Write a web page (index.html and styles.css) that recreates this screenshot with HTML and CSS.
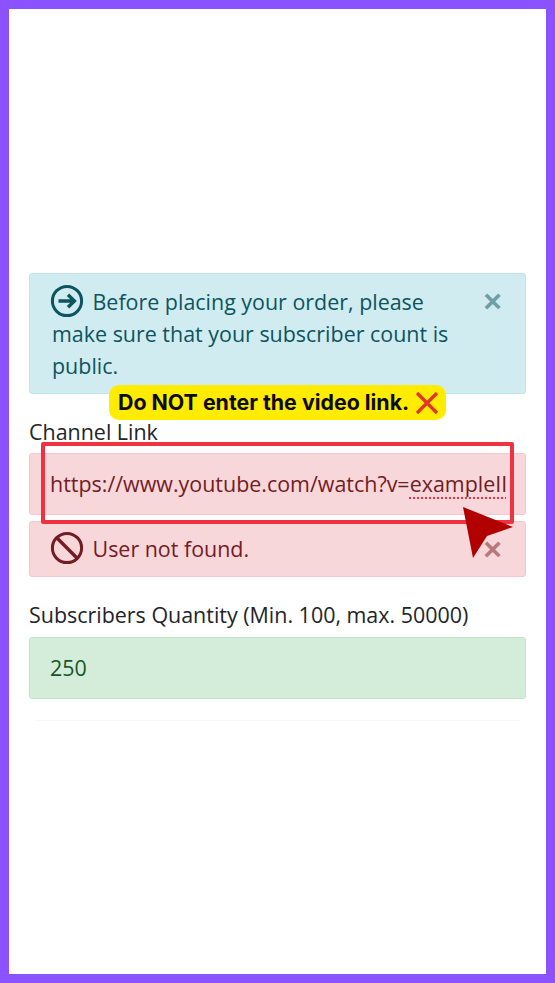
FILE: index.html
```html
<!DOCTYPE html>
<html lang="en">
<head>
<meta charset="utf-8">
<title>Order form</title>
<link rel="stylesheet" href="styles.css">
</head>
<body>
<main class="frame">
  <div class="alert alert-info">
    <p class="alert-text">
      <svg class="alert-icon" viewBox="0 0 34 34" width="34" height="34" aria-hidden="true">
        <circle cx="17" cy="17" r="14.6" fill="none" stroke="currentColor" stroke-width="3"/>
        <path d="M8.5 17H24M18 10.8 24.4 17 18 23.2" fill="none" stroke="currentColor" stroke-width="3.4"/>
      </svg>Before placing your order, please make sure that your subscriber count is public.
    </p>
    <span class="close close-info">×</span>
  </div>
  <label class="label label-channel">Channel Link</label>
  <div class="field field-invalid"><span class="field-value">https://www.youtube.com/watch?v=<span class="misspelt">exampleII</span></span></div>
  <div class="alert alert-danger">
    <p class="alert-text">
      <svg class="alert-icon" viewBox="0 0 34 34" width="34" height="34" aria-hidden="true">
        <circle cx="17" cy="17" r="14.6" fill="none" stroke="currentColor" stroke-width="3"/>
        <path d="M6.8 6.8 27.2 27.2" fill="none" stroke="currentColor" stroke-width="3.4"/>
      </svg>User not found.
    </p>
    <span class="close close-danger">×</span>
  </div>
  <label class="label label-quantity">Subscribers Quantity (Min. 100, max. 50000)</label>
  <div class="field field-valid"><span class="field-value">250</span></div>
  <hr class="rule">

  <div class="tag"><span class="tag-text">Do NOT enter the video link.</span>
    <svg class="tag-x" viewBox="0 0 24 24" width="24" height="24" aria-hidden="true">
      <path d="M2 2 22 22M22 2 2 22" fill="none" stroke="#e5322d" stroke-width="3.2"/>
    </svg>
  </div>
  <div class="highlight"></div>
  <svg class="pointer" viewBox="0 0 50 52" width="50" height="52" aria-hidden="true">
    <path d="M0 0 50 20 24 29 10 51Z" fill="#b00000"/>
  </svg>
</main>
</body>
</html>
```
FILE: styles.css
```css
* { box-sizing: border-box; }
html, body { margin: 0; padding: 0; background: #fff; }
.frame {
  position: relative;
  width: 555px;
  height: 983px;
  border: 9px solid #8c52ff;
  padding: 264px 20px 0;
  font-family: "Open Sans", sans-serif;
  font-size: 21.45px;
  color: #212529;
}
.alert {
  position: relative;
  border: 1px solid;
  border-radius: 3px;
  padding: 10px 70px 10px 22px;
}
.alert-text { margin: 0; line-height: 32px; }
.alert-icon { vertical-align: -8px; margin-right: 8.5px; margin-left: -2px; }
.alert-info { height: 121px; background: #d1ecf1; border-color: #bee5eb; color: #0c5460; }
.alert-danger { height: 56px; margin-top: 6px; padding-top: 9px; background: #f8d7da; border-color: #f5c6cb; color: #721c24; }
.close {
  position: absolute;
  right: 23px;
  font-family: "Liberation Sans", sans-serif;
  font-weight: 700;
  font-size: 32px;
  line-height: 32px;
  opacity: .5;
}
.close-info { top: 11px; }
.close-danger { top: 11px; }
.label { display: block; line-height: 32px; }
.label-channel { margin-top: 22px; margin-bottom: 5px; }
.label-quantity { margin-top: 22px; margin-bottom: 6px; }
.field {
  height: 62px;
  border: 1px solid;
  border-radius: 3px;
  padding: 0 19px 0 20px;
  line-height: 60px;
  white-space: nowrap;
  overflow: hidden;
}
.field-value { display: block; overflow: hidden; }
.field-invalid { background: #f8d7da; border-color: #f5c6cb; color: #721c24; }
.field-valid { background: #d4edda; border-color: #c3e6cb; color: #155724; }
.misspelt { text-decoration: underline dotted #e0304a 2px; text-underline-offset: 5px; }
.rule { margin: 21px 6px 0; border: 0; border-top: 1px solid #f8f8f8; }
.tag {
  position: absolute;
  left: 100px;
  top: 376px;
  width: 337px;
  height: 35px;
  display: flex;
  align-items: center;
  gap: 6px;
  padding-left: 9px;
  background: #ffec00;
  border-radius: 10px;
  font-family: "Inter", sans-serif;
  font-weight: 700;
  font-size: 21.35px;
  color: #0b0b0b;
  white-space: nowrap;
}
.tag-text { margin-top: -2px; }
.highlight {
  position: absolute;
  left: 32px;
  top: 433px;
  width: 473px;
  height: 82px;
  border: 4px solid #f0313f;
  border-radius: 2px;
}
.pointer { position: absolute; left: 454px; top: 498px; }
```
